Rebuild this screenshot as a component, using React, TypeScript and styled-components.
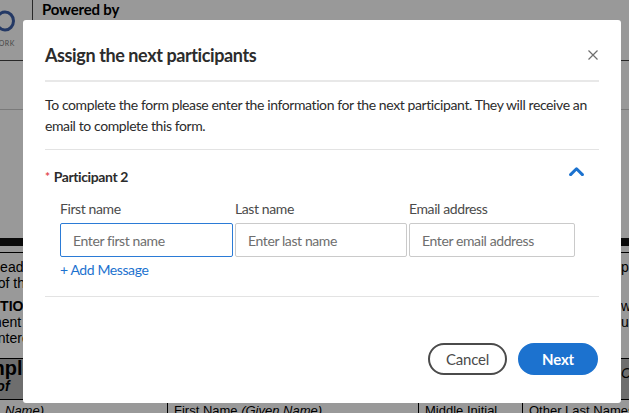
import React from "react";
import styled, { createGlobalStyle } from "styled-components";

const GlobalStyle = createGlobalStyle`
  html, body {
    margin: 0;
    padding: 0;
  }
  body {
    width: 629px;
    height: 413px;
    overflow: hidden;
    font-family: Lato, "Noto Sans", sans-serif;
  }
`;

const blue = "#1c72cf";

/* ---------- document behind the dialog ---------- */

const Page = styled.div`
  position: relative;
  width: 629px;
  height: 413px;
  overflow: hidden;
  background: #fff;
  color: #000;
  font-family: "Liberation Sans", Arial, sans-serif;
`;

const DocHeader = styled.header`
  height: 61px;
  box-sizing: border-box;
  display: flex;
  border-bottom: 1px solid #444;
`;

const LogoBox = styled.div`
  width: 33px;
  box-sizing: border-box;
  border-right: 1px solid #444;
  display: flex;
  flex-direction: column;
  padding-top: 10px;
  overflow: hidden;
`;

const LogoMark = styled.svg`
  margin-left: -13px;
  display: block;
`;

const LogoCaption = styled.span`
  font-family: Lato, sans-serif;
  font-size: 7px;
  letter-spacing: 0.5px;
  color: #777;
  margin: 7px 0 0 -9px;
  white-space: nowrap;
`;

const Powered = styled.div`
  padding: 1px 0 0 9px;
  font-family: Lato, sans-serif;
  font-weight: 700;
  font-size: 15px;
  line-height: 17px;
  letter-spacing: -0.2px;
`;

const Toolbar = styled.div`
  height: 48px;
  border-bottom: 1px solid #ccc;
`;

const FormTop = styled.div`
  height: 128px;
`;

const BlackBar = styled.div`
  height: 8px;
  background: #111;
  border-bottom: 6px solid #fff;
  box-shadow: 0 1px 0 #000;
`;

const Instructions = styled.div`
  padding-top: 7px;
  font-size: 14px;
`;

const InstructionRow = styled.div<{ $gap?: number }>`
  display: grid;
  grid-template-columns: 1fr 8px;
  height: 16px;
  line-height: 16px;
  margin-top: ${(p) => p.$gap ?? 0}px;
  white-space: nowrap;
  font-weight: ${(p) => (p.$gap ? 700 : 400)};
`;

const LeftText = styled.span`
  margin-left: -10px;
`;

const RightText = styled.span`
  font-weight: 400;
`;

const SectionBand = styled.div`
  margin-top: 12px;
  height: 41px;
  background: #b8b8b8;
  border-top: 1px solid #000;
  box-sizing: border-box;
  display: grid;
  grid-template-columns: 1fr 8px;
  white-space: nowrap;
  overflow: hidden;
`;

const BandTitle = styled.div`
  margin-left: -13px;
  b {
    display: block;
    font-size: 20px;
    line-height: 19px;
  }
  i {
    display: block;
    font-size: 14px;
    line-height: 16px;
    font-weight: 700;
  }
`;

const BandSide = styled.i`
  padding-top: 6px;
  font-size: 14px;
`;

const TableHead = styled.div`
  display: grid;
  grid-template-columns: 167px 251px 104px 1fr;
  border-top: 1px solid #000;
  font-size: 13px;
  line-height: 16px;
  white-space: nowrap;
`;

const HeadCell = styled.div<{ $first?: boolean }>`
  padding: 3px 0 0 ${(p) => (p.$first ? 5 : 6)}px;
  border-left: ${(p) => (p.$first ? "none" : "1px solid #000")};
`;

/* ---------- dialog ---------- */

const Overlay = styled.div`
  position: absolute;
  inset: 0;
  background: rgba(0, 0, 0, 0.4);
  display: flex;
  align-items: flex-start;
  padding: 20px 0 0 23px;
`;

const Modal = styled.div`
  width: 598px;
  height: 383px;
  box-sizing: border-box;
  padding: 0 22px;
  background: #fff;
  border-radius: 3px;
  display: flex;
  flex-direction: column;
  font-family: Lato, "Noto Sans", sans-serif;
  letter-spacing: -0.4px;
  color: #2c2c2c;
`;

const ModalHeader = styled.div`
  display: flex;
  align-items: center;
  justify-content: space-between;
  padding: 24px 0 14px;
  border-bottom: 2px solid #e8e8e8;
`;

const Title = styled.h2`
  margin: 0;
  font-size: 18px;
  line-height: 22px;
  font-weight: 700;
`;

const CloseButton = styled.button`
  border: 0;
  background: none;
  padding: 0;
  display: flex;
  margin-right: 1px;
  cursor: pointer;
`;

const Description = styled.p`
  margin: 0;
  padding: 12px 0 13px;
  font-size: 14px;
  line-height: 21px;
  border-bottom: 1px solid #e3e3e3;
`;

const ParticipantSection = styled.section`
  padding: 17px 0;
  border-bottom: 1px solid #e3e3e3;
`;

const ParticipantRow = styled.div`
  display: flex;
  justify-content: space-between;
  height: 20px;
  line-height: 20px;
`;

const ParticipantName = styled.div`
  font-size: 14px;
  font-weight: 700;
`;

const Required = styled.span`
  color: #e34850;
  font-size: 12px;
  margin-right: 4px;
  vertical-align: 1px;
`;

const Collapse = styled.button`
  align-self: flex-start;
  border: 0;
  background: none;
  padding: 0;
  margin-right: 15px;
  display: flex;
  cursor: pointer;
`;

const Fields = styled.div`
  display: grid;
  grid-template-columns: 173px 172px 166px;
  column-gap: 2px;
  margin: 13px 0 0 15px;
`;

const Field = styled.label`
  display: flex;
  flex-direction: column;
  gap: 5px;
`;

const FieldLabel = styled.span`
  font-size: 14px;
  line-height: 18px;
  color: #4b4b4b;
`;

const TextInput = styled.input<{ $active?: boolean }>`
  height: 34px;
  box-sizing: border-box;
  border: 1px solid ${(p) => (p.$active ? "#2b7bd6" : "#cacaca")};
  border-radius: 2px;
  padding: 0 12px;
  font-family: inherit;
  font-size: 14px;
  letter-spacing: -0.4px;
  color: #2c2c2c;
  outline: none;
  caret-color: #2c2c2c;
  &::placeholder {
    color: #6e6e6e;
  }
`;

const AddMessage = styled.button`
  align-self: flex-start;
  margin: 4px 0 0 15px;
  padding: 0;
  border: 0;
  background: none;
  font-family: inherit;
  font-size: 14px;
  letter-spacing: -0.4px;
  line-height: 18px;
  color: ${blue};
  cursor: pointer;
`;

const Footer = styled.div`
  margin-top: auto;
  padding: 0 1px 28px 0;
  display: flex;
  justify-content: flex-end;
  gap: 11px;
`;

const PillButton = styled.button<{ $primary?: boolean }>`
  height: 32px;
  width: ${(p) => (p.$primary ? 80 : 79)}px;
  box-sizing: border-box;
  border-radius: 16px;
  border: 2px solid ${(p) => (p.$primary ? blue : "#4b4b4b")};
  background: ${(p) => (p.$primary ? blue : "#fff")};
  color: ${(p) => (p.$primary ? "#fff" : "#4b4b4b")};
  font-family: inherit;
  font-size: 15px;
  letter-spacing: -0.2px;
  font-weight: ${(p) => (p.$primary ? 700 : 400)};
  padding: 0;
  cursor: pointer;
`;

const fields = [
  { label: "First name", placeholder: "Enter first name" },
  { label: "Last name", placeholder: "Enter last name" },
  { label: "Email address", placeholder: "Enter email address" },
];

const App: React.FC = () => (
  <>
    <GlobalStyle />
    <Page>
      <DocHeader>
        <LogoBox>
          <LogoMark width="28" height="22" viewBox="0 0 28 22">
            <ellipse cx="18" cy="11" rx="8.5" ry="9" fill="none" stroke="#3d5fa8" strokeWidth="3" />
          </LogoMark>
          <LogoCaption>WORK</LogoCaption>
        </LogoBox>
        <Powered>
          Powered by
          <br />
          Adobe Sign
        </Powered>
      </DocHeader>
      <Toolbar />
      <FormTop />
      <BlackBar />
      <Instructions>
        <InstructionRow>
          <LeftText>Read</LeftText>
          <RightText>pa</RightText>
        </InstructionRow>
        <InstructionRow>
          <LeftText>&nbsp;&nbsp;of the</LeftText>
          <RightText />
        </InstructionRow>
        <InstructionRow $gap={7}>
          <LeftText>NTION</LeftText>
          <RightText>w</RightText>
        </InstructionRow>
        <InstructionRow>
          <LeftText>ment t</LeftText>
          <RightText>ua</RightText>
        </InstructionRow>
        <InstructionRow>
          <LeftText>entered</LeftText>
          <RightText />
        </InstructionRow>
      </Instructions>
      <SectionBand>
        <BandTitle>
          <b>mployee</b>
          <i>r of</i>
        </BandTitle>
        <BandSide>C</BandSide>
      </SectionBand>
      <TableHead>
        <HeadCell $first>
          <i>Name)</i>
        </HeadCell>
        <HeadCell>
          First Name <i>(Given Name)</i>
        </HeadCell>
        <HeadCell>Middle Initial</HeadCell>
        <HeadCell>Other Last Names</HeadCell>
      </TableHead>

      <Overlay>
        <Modal role="dialog" aria-label="Assign the next participants">
          <ModalHeader>
            <Title>Assign the next participants</Title>
            <CloseButton aria-label="Close">
              <svg width="10" height="10" viewBox="0 0 10 10">
                <path d="M0.5 0.5 L9.5 9.5 M9.5 0.5 L0.5 9.5" stroke="#6e6e6e" strokeWidth="1.2" />
              </svg>
            </CloseButton>
          </ModalHeader>
          <Description>
            To complete the form please enter the information for the next participant. They will
            receive an email to complete this form.
          </Description>
          <ParticipantSection>
            <ParticipantRow>
              <ParticipantName>
                <Required>*</Required>
                Participant 2
              </ParticipantName>
              <Collapse aria-label="Collapse">
                <svg width="15" height="9" viewBox="0 0 15 9">
                  <polyline
                    points="1.6,7.6 7.5,1.8 13.4,7.6"
                    fill="none"
                    stroke={blue}
                    strokeWidth="3"
                    strokeLinecap="round"
                    strokeLinejoin="round"
                  />
                </svg>
              </Collapse>
            </ParticipantRow>
            <Fields>
              {fields.map((f, i) => (
                <Field key={f.label}>
                  <FieldLabel>{f.label}</FieldLabel>
                  <TextInput $active={i === 0} placeholder={f.placeholder} autoFocus={i === 0} />
                </Field>
              ))}
            </Fields>
            <AddMessage>+ Add Message</AddMessage>
          </ParticipantSection>
          <Footer>
            <PillButton>Cancel</PillButton>
            <PillButton $primary>Next</PillButton>
          </Footer>
        </Modal>
      </Overlay>
    </Page>
  </>
);

export default App;
